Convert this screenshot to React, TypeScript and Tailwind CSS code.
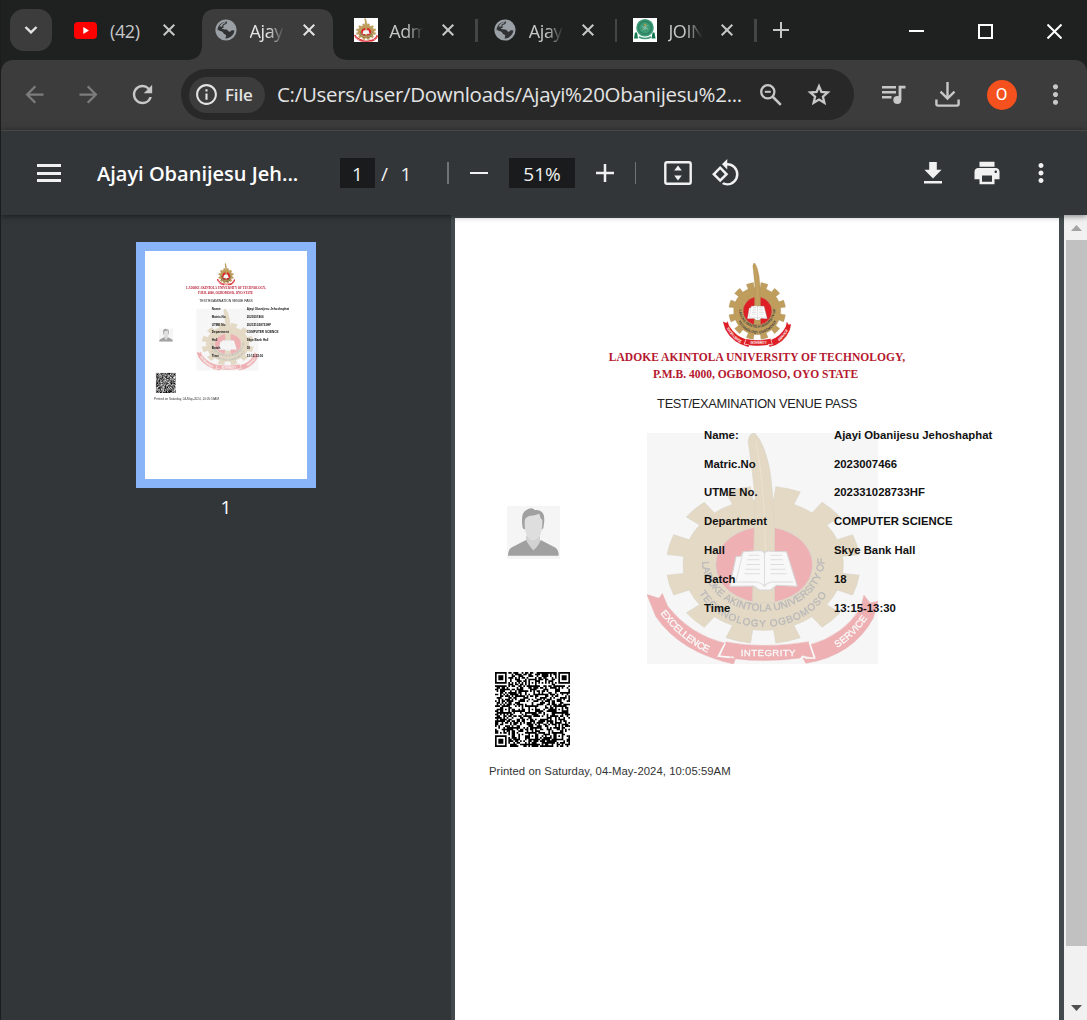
import React, { useId } from "react";
import {
  MdArrowBack,
  MdArrowForward,
  MdRefresh,
  MdInfoOutline,
  MdMoreVert,
  MdPrint,
  MdRotate90DegreesCcw,
} from "react-icons/md";

const CX = 370;
const CY = 419;

function ellipsePoint(rx: number, ry: number, deg: number) {
  const a = (deg * Math.PI) / 180;
  return `${(CX + rx * Math.sin(a)).toFixed(1)},${(CY - ry * Math.cos(a)).toFixed(1)}`;
}

// Twelve-tooth gear outline, drawn on an ellipse.
function gearPath() {
  let d = "";
  for (let i = 0; i < 12; i++) {
    const c = 15 + i * 30;
    d += `${i === 0 ? "M" : "L"}${ellipsePoint(240, 196, c - 7.5)} L${ellipsePoint(290, 236, c - 7.5)} `;
    d += `A290,236 0 0 1 ${ellipsePoint(290, 236, c + 7.5)} L${ellipsePoint(240, 196, c + 7.5)} `;
    d += `A240,196 0 0 1 ${ellipsePoint(240, 196, c + 22.5)} `;
  }
  return d + "Z";
}
const GEAR = gearPath();

function Emblem({ className }: { className: string }) {
  const id = useId().replace(/:/g, "");
  return (
    <svg className={className} viewBox="22 24 692 692" preserveAspectRatio="none">
      <defs>
        <path id={`${id}a`} d="M187,410 A183,152 0 0 0 553,402" />
        <path id={`${id}b`} d="M178,503 A213,178 0 0 0 566,498" />
        <path id={`${id}c`} d="M62,564 Q120,642 206,684" />
        <path id={`${id}d`} d="M592,668 Q650,630 686,574" />
      </defs>
      <path d={GEAR} fill="#bf9d5c" stroke="#a08f66" strokeWidth="2" />
      <ellipse cx="373" cy="419" rx="145" ry="114" fill="#de1f26" stroke="#999" strokeWidth="2" />
      <path
        d="M338,532 L346,220 Q336,120 325,50 Q328,24 344,24 Q372,50 389,130 Q400,200 404,310 L404,532 Z"
        fill="#bf9d5c"
        stroke="#a08f66"
        strokeWidth="2"
      />
      <path d="M348,50 Q374,180 377,378" fill="none" stroke="#d4b981" strokeWidth="3" />
      <path
        d="M310,380 L360,376 Q370,376 374,384 Q378,376 390,378 L440,380 L472,483 L410,480 L392,494 L358,494 L342,482 L270,483 L289,394 L303,394 Z"
        fill="#fff"
        stroke="#999"
        strokeWidth="3"
      />
      <path
        d="M310,380 L288,470 L350,470 Q368,474 374,484 Q380,472 396,470 L460,470 M374,384 V482 M325,390 H358 M322,404 H359 M320,418 H360 M317,432 H360 M314,446 H360 M392,390 H426 M392,404 H429 M392,418 H433 M392,432 H437 M392,446 H441"
        fill="none"
        stroke="#aaa"
        strokeWidth="3"
      />
      <g
        fill="#3a3a40"
        stroke="#3a3a40"
        strokeWidth="1"
        fontFamily="'Liberation Sans', sans-serif"
        fontSize="30"
      >
        <text>
          <textPath href={`#${id}a`} textLength="530">LADOKE AKINTOLA UNIVERSITY OF</textPath>
        </text>
        <text>
          <textPath href={`#${id}b`} textLength="450">TECHNOLOGY OGBOMOSO</textPath>
        </text>
      </g>
      <g fill="#de1f26" stroke="#c9252b" strokeWidth="1.5">
        <path d="M22,508 L58,519 L68,505 L84,543 Q150,628 256,654 L236,692 L287,700 L281,716 Q120,680 48,573 Z" />
        <path d="M258,650 Q370,672 508,649 L524,698 L487,690 L480,698 Q375,712 286,700 L280,692 L241,695 Z" />
        <path d="M714,528 L690,533 L672,510 L662,548 Q610,632 505,660 L528,695 L489,699 L498,714 Q640,690 700,578 Z" />
      </g>
      <path d="M256,654 L236,692 L270,696 M508,649 L524,698 L495,698" fill="none" stroke="#fff" strokeWidth="5" />
      <g
        fill="#fff"
        stroke="#fff"
        strokeWidth="1"
        fontFamily="'Liberation Sans', sans-serif"
        fontSize="29"
      >
        <text>
          <textPath href={`#${id}c`} textLength="186">EXCELLENCE</textPath>
        </text>
        <text x="303" y="693" textLength="164">INTEGRITY</text>
        <text>
          <textPath href={`#${id}d`} textLength="128">SERVICE</textPath>
        </text>
      </g>
    </svg>
  );
}

// 45x45 module matrix with finder, timing and alignment patterns.
function qrPath() {
  const n = 45;
  let seed = 20230074;
  const rand = () => {
    seed = (seed * 1103515245 + 12345) % 2147483648;
    return seed / 2147483648;
  };
  const inFinder = (x: number, y: number) =>
    (x < 8 && y < 8) || (x > n - 9 && y < 8) || (x < 8 && y > n - 9);
  const finder = (x: number, y: number) => {
    const fx = x > n - 9 ? x - (n - 7) : x;
    const fy = y > n - 9 ? y - (n - 7) : y;
    if (fx < 0 || fy < 0 || fx > 6 || fy > 6) return false;
    const r = Math.max(Math.abs(fx - 3), Math.abs(fy - 3));
    return r !== 2;
  };
  const mids = [6, 22, 38];
  let d = "";
  for (let y = 0; y < n; y++) {
    for (let x = 0; x < n; x++) {
      let on = rand() < 0.54;
      if (x === 6 || y === 6) on = (x + y) % 2 === 0;
      for (const mx of mids)
        for (const my of mids) {
          const r = Math.max(Math.abs(x - mx), Math.abs(y - my));
          if (r <= 2 && !inFinder(mx, my)) on = r !== 1;
        }
      if (inFinder(x, y)) on = finder(x, y);
      if (on) d += `M${x},${y}h1v1h-1z`;
    }
  }
  return d;
}
const QR = qrPath();

const rows = [
  ["Name:", "Ajayi Obanijesu Jehoshaphat"],
  ["Matric.No", "2023007466"],
  ["UTME No.", "202331028733HF"],
  ["Department", "COMPUTER SCIENCE"],
  ["Hall", "Skye Bank Hall"],
  ["Batch", "18"],
  ["Time", "13:15-13:30"],
];

function Portrait() {
  return (
    <svg className="h-[53px] w-[53px]" viewBox="51 46 159 159">
      <rect x="51" y="46" width="159" height="159" fill="#f5f5f5" />
      <path d="M108,135 h42 v22 l-20,26 -22,-26z" fill="#d2d2d2" />
      <path
        d="M98,112 Q92,72 104,62 Q118,50 130,54 L134,58 Q152,56 160,70 Q166,82 160,112 L157,116 H102 Z"
        fill="#a0a0a0"
      />
      <path
        d="M104,90 Q106,80 118,76 Q136,74 148,69 Q150,82 157,88 Q158,122 148,138 Q130,160 112,138 Q103,120 104,90Z"
        fill="#dedede"
      />
      <path
        d="M54,195 Q54,176 66,170 L108,148 Q114,160 130,179 Q148,162 152,148 L194,170 Q206,176 206,195 Z"
        fill="#a0a0a0"
      />
      <path d="M110,148 Q114,160 130,179 Q146,164 150,148 Q130,170 110,148Z" fill="#d2d2d2" />
    </svg>
  );
}

function PassPage() {
  return (
    <div className="flex h-[850px] w-[604px] flex-col bg-white font-['Liberation_Sans',sans-serif]">
      <div className="flex h-[215px] flex-col items-center pt-[45px]">
        <Emblem className="h-[84px] w-[68px]" />
        <div className="mt-[2px] whitespace-nowrap text-center font-['Liberation_Serif',serif] text-[11.5px] font-bold leading-[17px] text-[#b5182f]">
          <div className="tracking-[0.03px]">LADOKE AKINTOLA UNIVERSITY OF TECHNOLOGY,</div>
          <div className="pr-[3px]">P.M.B. 4000, OGBOMOSO, OYO STATE</div>
        </div>
        <div className="mt-[12px] whitespace-nowrap text-[12.8px] leading-[18px] tracking-[-0.3px] text-[#222]">
          TEST/EXAMINATION VENUE PASS
        </div>
      </div>
      <div className="relative flex h-[239px]">
        <div className="absolute left-[192px] top-0 h-[231px] w-[231px] bg-[#f6f6f6]">
          <Emblem className="block h-full w-full opacity-[0.32]" />
        </div>
        <div className="w-[249px] pl-[52px] pt-[73px]">
          <Portrait />
        </div>
        <div className="relative -mt-[12px] text-[11.35px] font-bold text-[#111]">
          {rows.map(([label, value]) => (
            <div key={label} className="flex h-[28.8px] items-center whitespace-nowrap">
              <span className="w-[130px]">{label}</span>
              <span>{value}</span>
            </div>
          ))}
        </div>
      </div>
      <svg className="ml-[40px] h-[75px] w-[75px] shrink-0" viewBox="0 0 45 45">
        <path d={QR} fill="#000" />
      </svg>
      <div className="ml-[34px] mt-[16px] whitespace-nowrap text-[11.3px] leading-[16px] tracking-[0.06px] text-[#333]">
        Printed on Saturday, 04-May-2024, 10:05:59AM
      </div>
    </div>
  );
}

function Cross({ color }: { color: string }) {
  return (
    <svg width="12" height="12" viewBox="0 0 12 12" stroke={color} strokeWidth="2" fill="none">
      <path d="M.7 .7 11.3 11.3M11.3 .7.7 11.3" />
    </svg>
  );
}

function Globe() {
  return (
    <svg width="22" height="22" viewBox="0 0 22 22" className="shrink-0">
      <circle cx="11" cy="11" r="10.6" fill="#9aa0a6" />
      <path
        d="M12.3 2.6C11.6 4.2 12 5.2 10.2 5.4 8.6 5.6 8.2 6.6 8.6 7.8 9 9 7.4 9.2 6.6 8.8 7 10.6 9.2 10.4 11.4 10.4 13.4 10.6 13 12.8 14.6 12.8 16.2 12.8 15.6 11 17.4 11.2L19.4 11.6C19 15.6 15.6 19.2 11.4 19.4L10.6 19.4C10.8 17.4 12 16.4 10.2 15.6 8.2 15 8.6 13.2 7 12.4L2.6 11.2C2.8 6.4 6.6 2.6 12.3 2.6Z"
        fill="#303233"
      />
      <path d="M3 10.4 C3.6 12 6.6 12.4 7.2 14.4 7.4 16.4 9.4 16.4 9.4 19.2 5.4 18.6 2.8 15 3 10.4Z" fill="#9aa0a6" />
      <path d="M4.4 7.6 C5.6 5 8 3.4 10.6 2.9 L10.2 4.6 C7.6 4.6 7.4 6.4 7.4 7.6Z" fill="#9aa0a6" />
    </svg>
  );
}

function Tab({
  icon,
  label,
  active = false,
  separator = false,
}: {
  icon: React.ReactNode;
  label: string;
  active?: boolean;
  separator?: boolean;
}) {
  return (
    <div className="relative mt-[9px] flex h-[51px] w-[139.6px] shrink-0">
      {active && (
        <svg className="absolute -left-[14px] top-0" width="159" height="51" viewBox="0 0 159 51">
          <path
            d="M0,51 Q14,50 14,36 V14 Q14,0 28,0 H131 Q145,0 145,14 V36 Q145,50 159,51 Z"
            fill="#3c3c3c"
          />
        </svg>
      )}
      <div className="relative flex h-[42px] items-center">
        <div className="ml-[12.5px] flex w-6 items-center justify-center">{icon}</div>
        <div
          className={`ml-[11.5px] mt-[2px] w-[36px] overflow-hidden whitespace-nowrap text-[18px] tracking-[-0.4px] ${
            active ? "text-[#e3e3e3]" : "text-[#c7c7c7]"
          } ${label === "(42)" ? "" : "[mask-image:linear-gradient(to_right,black_50%,transparent_96%)]"}`}
        >
          {label}
        </div>
        <div className="ml-[17px]">
          <Cross color={active ? "#e3e3e3" : "#c7c7c7"} />
        </div>
        {separator && <div className="ml-[21px] h-[23px] w-[2.5px] bg-[#444645]" />}
      </div>
    </div>
  );
}

function YouTube() {
  return (
    <svg width="23" height="17" viewBox="0 0 23 17" className="-ml-[2px] shrink-0">
      <rect width="23" height="17" rx="4" fill="#f00" />
      <path d="M9.3 5 15 8.5 9.3 12z" fill="#fff" />
    </svg>
  );
}

function GreenSeal() {
  return (
    <svg width="24" height="24" viewBox="0 0 24 24">
      <rect width="24" height="24" fill="#fff" />
      <circle cx="12" cy="9.7" r="8.8" fill="#3f9a78" />
      <circle cx="12" cy="9.7" r="6.4" fill="none" stroke="#2a805f" strokeWidth="1.5" />
      <path d="M12 7v5M9 8.5l6 2.5M9.5 12l5-4.5" stroke="#8fbfa3" strokeWidth="1" />
      <path d="M11.5 6l1.5 1.6" stroke="#d69a35" strokeWidth="1.3" />
      <path d="M1 20.5l1-6h2l1 6zM18.5 20.5l1-6h2l1 6z" fill="#137a50" />
      <path d="M6 19 Q12 22 18 19" fill="none" stroke="#3f9a78" strokeWidth="1.5" />
    </svg>
  );
}

function TabStrip() {
  return (
    <div className="flex h-[60px] bg-[#1f2120]">
      <div className="ml-[9px] mt-[9px] flex h-[42px] w-[42px] items-center justify-center rounded-[14px] bg-[#3c3c3c]">
        <svg width="14" height="8" viewBox="0 0 14 8" fill="none" stroke="#e3e3e3" strokeWidth="2.4">
          <path d="M1.5 1 7 6.4 12.5 1" />
        </svg>
      </div>
      <div className="ml-[10px] flex">
        <Tab icon={<YouTube />} label="(42)" />
        <Tab icon={<Globe />} label="Ajayi" active />
        <Tab
          icon={
            <div className="h-6 w-6 bg-white">
              <Emblem className="block h-6 w-6" />
            </div>
          }
          label="Adm"
          separator
        />
        <Tab icon={<Globe />} label="Ajayi" separator />
        <Tab icon={<GreenSeal />} label="JOIN" separator />
      </div>
      <svg
        className="ml-[13px] mt-[22px]"
        width="16"
        height="16"
        viewBox="0 0 16 16"
        stroke="#c7c7c7"
        strokeWidth="2"
      >
        <path d="M8 0V16M0 8H16" />
      </svg>
      <div className="ml-auto mr-[25px] flex items-center gap-[54px] pt-[2px]">
        <div className="h-[2px] w-[15px] bg-white" />
        <div className="h-[15px] w-[15px] border-2 border-white" />
        <svg width="15" height="15" viewBox="0 0 15 15" stroke="#fff" strokeWidth="2">
          <path d="M.5 .5 14.5 14.5M14.5 .5 .5 14.5" />
        </svg>
      </div>
    </div>
  );
}

function AddressBar() {
  return (
    <div className="bg-[#1f2120]">
      <div className="flex h-[70px] items-center rounded-t-[12px] bg-[#3c3c3c] pb-px pl-[6px] text-[#c7c7c7]">
        <div className="flex w-[54px] justify-center text-[#7c7c7c]">
          <MdArrowBack size={27} />
        </div>
        <div className="flex w-[54px] justify-center text-[#7c7c7c]">
          <MdArrowForward size={27} />
        </div>
        <div className="flex w-[54px] justify-center">
          <MdRefresh size={29} />
        </div>
        <div className="ml-[12px] flex h-[51px] w-[673px] items-center rounded-full bg-[#282828] pl-2">
          <div className="flex h-[36px] w-[76px] shrink-0 items-center rounded-full bg-[#3c3c3c] pl-[5px] text-[#e3e3e3]">
            <MdInfoOutline size={25} />
            <span className="ml-[6px] text-[17px] font-semibold tracking-[-0.2px]">File</span>
          </div>
          <div className="ml-[12px] w-[479px] whitespace-nowrap text-[20.5px] tracking-[-0.3px] text-[#e3e3e3]">
            C:/Users/user/Downloads/Ajayi%20Obanijesu%2...
          </div>
          <svg
            className="ml-[4px] shrink-0"
            width="22"
            height="22"
            viewBox="0 0 22 22"
            fill="none"
            stroke="#c7c7c7"
            strokeWidth="2.3"
          >
            <circle cx="7.8" cy="7.8" r="6.6" />
            <path d="M12.5 12.5 20.8 20.8" strokeWidth="2.6" />
            <path d="M4.8 7.8H10.800" strokeWidth="2" />
          </svg>
          <svg
            className="ml-[25px] shrink-0"
            width="24"
            height="24"
            viewBox="0 0 24 24"
            fill="none"
            stroke="#c7c7c7"
            strokeWidth="2.3"
          >
            <path d="M12 3.2 14.4 9 20.700 9.500 15.900 13.600 17.400 19.800 12 16.500 6.600 19.800 8.100 13.600 3.300 9.500 9.600 9Z" />
          </svg>
        </div>
        <div className="ml-[13px] flex w-[54px] justify-center">
          <svg width="24" height="20" viewBox="0 0 24 20" fill="none" stroke="#c7c7c7" strokeWidth="2.5">
            <path d="M0 2.2H14M0 7.2H14M0 12.2H9.5" />
            <circle cx="15.3" cy="14.9" r="4" fill="#c7c7c7" stroke="none" />
            <path d="M18 15V2.2H23.5" strokeWidth="2.8" />
          </svg>
        </div>
        <div className="flex w-[53px] justify-center">
          <svg width="25" height="25" viewBox="0 0 25 25" fill="none" stroke="#c7c7c7" strokeWidth="2.4">
            <path d="M12.5 0V16M5.5 9.6l7 7 7-7M1.4 17.5V22Q1.4 23.6 3 23.6H22Q23.6 23.6 23.6 22V17.5" />
          </svg>
        </div>
        <div className="flex w-[55px] justify-center">
          <div className="flex h-[30px] w-[30px] items-center justify-center rounded-full bg-[#f4511e] font-['Roboto',sans-serif] text-[17px] text-white">
            O
          </div>
        </div>
        <div className="flex w-[53px] justify-center">
          <MdMoreVert size={31} />
        </div>
      </div>
    </div>
  );
}

function PdfToolbar() {
  return (
    <div className="relative z-10 flex h-[85px] items-center border-t border-[#464846] bg-[#323639] text-[#f1f1f1] shadow-[0_1px_6px_rgba(0,0,0,0.5)]">
      <div className="ml-[36px] flex h-[18px] w-[24px] flex-col justify-between">
        <div className="h-[3px] bg-[#f1f1f1]" />
        <div className="h-[3px] bg-[#f1f1f1]" />
        <div className="h-[3px] bg-[#f1f1f1]" />
      </div>
      <div className="ml-[36px] mt-[2px] w-[243px] whitespace-nowrap text-[20px] font-semibold text-white">
        Ajayi Obanijesu Jeh...
      </div>
      <div className="flex h-[30px] w-[35px] items-center justify-center bg-[#191b1c] pt-[2px] text-[19px]">1</div>
      <div className="ml-[6px] mt-[2px] text-[19px]">/</div>
      <div className="ml-[12px] mt-[2px] w-[12px] text-center text-[19px]">1</div>
      <div className="ml-auto flex items-center">
        <div className="h-[22px] w-[2px] bg-[#6f7274]" />
        <div className="ml-[21px] h-[2.5px] w-[18px] bg-[#f1f1f1]" />
        <div className="ml-[21px] flex h-[30px] w-[66px] items-center justify-center bg-[#191b1c] pt-[2px] text-[19px]">
          51%
        </div>
        <svg className="ml-[21px]" width="18" height="18" viewBox="0 0 18 18" stroke="#f1f1f1" strokeWidth="2.5">
          <path d="M9 0V18M0 9H18" />
        </svg>
        <div className="ml-[21px] h-[22px] w-[1px] bg-[#6f7274]" />
        <svg className="ml-[28px]" width="28" height="24" viewBox="0 0 28 24">
          <rect x="1.3" y="1.3" width="25.4" height="21.4" rx="1.8" fill="none" stroke="#f1f1f1" strokeWidth="2.4" />
          <path d="M14 4.6 17.8 9.6H10.2zM14 19.4 17.8 14.4H10.2z" fill="#f1f1f1" />
        </svg>
        <MdRotate90DegreesCcw className="ml-[19px]" size={30} />
      </div>
      <div className="ml-[165px] flex w-[54px] justify-center">
        <svg width="18" height="22" viewBox="0 0 18 22" fill="#f1f1f1">
          <path d="M5.2 0h7.6v7.8H17.6L9 16.6 .4 7.8H5.2zM0 19h18v2.6H0z" />
        </svg>
      </div>
      <div className="flex w-[54px] justify-center">
        <MdPrint size={30} />
      </div>
      <div className="mr-[19px] flex w-[54px] justify-center">
        <MdMoreVert size={30} />
      </div>
    </div>
  );
}

export default function App() {
  return (
    <div className="flex h-[1020px] w-[1087px] flex-col overflow-hidden border-l border-[#1b1c1c] bg-[#323639] font-['Open_Sans','Noto_Sans',sans-serif]">
      <TabStrip />
      <AddressBar />
      <PdfToolbar />
      <div className="flex min-h-0 flex-1">
        <aside className="flex w-[450px] shrink-0 flex-col items-center bg-[#323639] pt-[27px]">
          <div className="h-[246px] w-[180px] border-[9px] border-[#8ab4f8] bg-white">
            <div className="h-[228px] w-[162px] overflow-hidden">
              <div className="origin-top-left scale-[0.2682]">
                <PassPage />
              </div>
            </div>
          </div>
          <div className="mt-[6px] text-[19px] leading-[26px] text-white">1</div>
        </aside>
        <main className="flex flex-1 overflow-hidden bg-[#434a4d] pl-[4px] pt-[3px]">
          <PassPage />
        </main>
        <div className="flex w-[23px] shrink-0 flex-col items-center bg-[#f1f1f1] pl-[2px]">
          <svg className="mt-[10px]" width="11" height="6" viewBox="0 0 11 6">
            <path d="M5.5 0 11 6H0z" fill="#a3a3a3" />
          </svg>
          <div className="mt-[9px] h-[706px] w-full bg-[#c1c1c1]" />
          <svg className="mb-[9px] mt-auto" width="11" height="6" viewBox="0 0 11 6">
            <path d="M0 0H11L5.5 6z" fill="#505050" />
          </svg>
        </div>
      </div>
    </div>
  );
}
